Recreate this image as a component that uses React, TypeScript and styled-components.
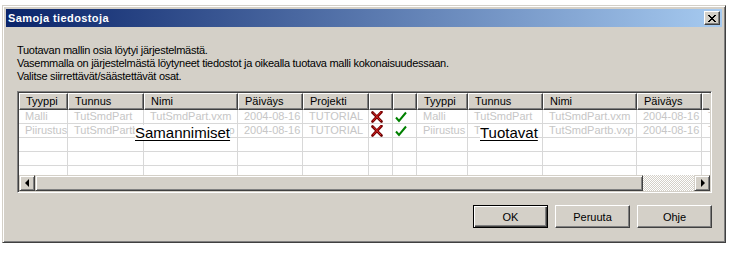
import React from "react";
import styled, { createGlobalStyle } from "styled-components";

const GlobalStyle = createGlobalStyle`
  html, body { margin: 0; padding: 0; background: #ffffff; }
  body { font-family: "Liberation Sans", Arial, sans-serif; font-size: 11px; }
  * { box-sizing: border-box; }
`;

const FACE = "#D4D0C8";

const Window = styled.div`
  margin: 5px 0 0 2px;
  width: 724px;
  height: 238px;
  background: ${FACE};
  border: 1px solid;
  border-color: ${FACE} #404040 #404040 ${FACE};
  box-shadow: inset 1px 1px #ffffff, inset -1px -1px #808080;
  padding: 3px;
  display: flex;
  flex-direction: column;
`;

const TitleBar = styled.div`
  height: 18px;
  display: flex;
  align-items: center;
  justify-content: space-between;
  padding: 0 2px 0 2px;
  background: linear-gradient(to right, #0a246a, #a6caf0);
`;

const TitleText = styled.span`
  color: #ffffff;
  font-weight: bold;
  font-size: 11px;
  font-family: "Liberation Sans", Arial, sans-serif;
  letter-spacing: 0.4px;
`;

const CloseButton = styled.div`
  width: 16px;
  height: 14px;
  background: ${FACE};
  border: 1px solid;
  border-color: #ffffff #404040 #404040 #ffffff;
  box-shadow: inset -1px -1px #808080;
  display: flex;
  align-items: center;
  justify-content: center;
`;

const Content = styled.div`
  flex: 1;
  display: flex;
  flex-direction: column;
  padding: 17px 10px 0 11px;
`;

const Message = styled.div`
  color: #000000;
  font-size: 11px;
  line-height: 13px;
  letter-spacing: -0.28px;
`;

const GridFrame = styled.div`
  margin-top: 8px;
  width: 695px;
  height: 102px;
  border: 1px solid;
  border-color: #808080 #ffffff #ffffff #808080;
  box-shadow: inset 1px 1px #404040, inset -1px -1px ${FACE};
  padding: 1px;
  display: flex;
  flex-direction: column;
`;

const Client = styled.div`
  flex: 1;
  overflow: hidden;
  display: flex;
  flex-direction: column;
  background: #ffffff;
`;

const HeaderRow = styled.div`
  display: flex;
  height: 17px;
  flex-shrink: 0;
`;

const HeaderCell = styled.div<{ $w: number; $last?: boolean }>`
  width: ${(p) => p.$w}px;
  flex-shrink: 0;
  height: 17px;
  background: ${FACE};
  border: 1px solid;
  border-color: #ffffff ${(p) => (p.$last ? FACE : "#404040")} #404040 #ffffff;
  box-shadow: ${(p) => (p.$last ? "inset 0 -1px #808080" : "inset -1px -1px #808080")};
  padding-left: 6px;
  line-height: 14px;
  font-size: 11px;
  color: #000000;
  white-space: nowrap;
  overflow: hidden;
`;

const BodyViewport = styled.div`
  position: relative;
  height: 65px;
  overflow: hidden;
  flex-shrink: 0;
`;

const Row = styled.div`
  display: flex;
  height: 14px;
`;

const Cell = styled.div<{ $w: number; $icon?: boolean; $last?: boolean }>`
  width: ${(p) => p.$w}px;
  flex-shrink: 0;
  height: 14px;
  border-right: ${(p) => (p.$last ? "none" : "1px solid #d8d8d8")};
  border-bottom: 1px solid #d8d8d8;
  padding-left: ${(p) => (p.$icon ? "2px" : "6px")};
  line-height: 13px;
  font-size: 11px;
  color: #c6c6c6;
  white-space: nowrap;
  overflow: hidden;
  display: flex;
  align-items: center;
`;

const OverlayLabel = styled.span<{ $left: number }>`
  position: absolute;
  left: ${(p) => p.$left}px;
  top: 15px;
  background: #ffffff;
  color: #000000;
  font-size: 15px;
  line-height: 15px;
  text-decoration: underline;
  text-underline-offset: 2px;
  white-space: nowrap;
`;

const ScrollBar = styled.div`
  display: flex;
  height: 16px;
  flex-shrink: 0;
`;

const Raised = styled.div`
  background: ${FACE};
  border: 1px solid;
  border-color: ${FACE} #404040 #404040 ${FACE};
  box-shadow: inset 1px 1px #ffffff, inset -1px -1px #808080;
`;

const ArrowButton = styled(Raised)`
  width: 16px;
  height: 16px;
  flex-shrink: 0;
  display: flex;
  align-items: center;
  justify-content: center;
`;

const Arrow = styled.div<{ $dir: "left" | "right" }>`
  width: 0;
  height: 0;
  border-top: 4px solid transparent;
  border-bottom: 4px solid transparent;
  ${(p) =>
    p.$dir === "left"
      ? "border-right: 4px solid #000; margin-right: 1px;"
      : "border-left: 4px solid #000; margin-left: 1px;"}
`;

const Thumb = styled(Raised)`
  width: 608px;
  height: 16px;
  flex-shrink: 0;
`;

const Track = styled.div`
  flex: 1;
  height: 16px;
  background: repeating-conic-gradient(${FACE} 0 25%, #ffffff 0 50%) 0 0 / 2px 2px;
`;

const ButtonRow = styled.div`
  margin-top: 12px;
  display: flex;
  justify-content: flex-end;
  gap: 7px;
  width: 695px;
`;

const PushButton = styled.div<{ $default?: boolean }>`
  width: 75px;
  height: 23px;
  background: ${FACE};
  display: flex;
  align-items: center;
  justify-content: center;
  font-size: 11px;
  color: #000000;
  border: 1px solid;
  ${(p) =>
    p.$default
      ? `border-color: #000000;
         box-shadow: inset 1px 1px #ffffff, inset -1px -1px #404040, inset -2px -2px #808080;`
      : `border-color: #ffffff #404040 #404040 #ffffff;
         box-shadow: inset -1px -1px #808080;`}
`;

const RedX = () => (
  <svg width="12" height="12" viewBox="0 0 12 12">
    <path d="M1.5 1.5 L10.5 10.5" stroke="#6a0000" strokeWidth="2.6" strokeLinecap="round" />
    <path d="M10.5 1 L1.5 10.5" stroke="#7a0000" strokeWidth="2.6" strokeLinecap="round" />
    <path d="M2 1.5 L10 10" stroke="#e03030" strokeWidth="1" />
    <path d="M10 1 L2 10" stroke="#d02020" strokeWidth="1" />
  </svg>
);

const GreenCheck = () => (
  <svg width="12" height="12" viewBox="0 0 12 12">
    <path d="M1 6.5 L4 10 L11 1.5" stroke="#008000" strokeWidth="2" fill="none" strokeLinejoin="miter" />
  </svg>
);

const CloseGlyph = () => (
  <svg width="8" height="7" viewBox="0 0 8 7" shapeRendering="crispEdges">
    <path
      d="M0 0h2v1h-2z M6 0h2v1h-2z M1 1h2v1h-2z M5 1h2v1h-2z M2 2h4v1h-4z M3 3h2v1h-2z M2 4h4v1h-4z M1 5h2v1h-2z M5 5h2v1h-2z M0 6h2v1h-2z M6 6h2v1h-2z"
      fill="#000"
    />
  </svg>
);

type Col = { title: string; w: number; icon?: boolean };

const columns: Col[] = [
  { title: "Tyyppi", w: 49 },
  { title: "Tunnus", w: 76 },
  { title: "Nimi", w: 94 },
  { title: "Päiväys", w: 65 },
  { title: "Projekti", w: 66 },
  { title: "", w: 24, icon: true },
  { title: "", w: 24, icon: true },
  { title: "Tyyppi", w: 51 },
  { title: "Tunnus", w: 75 },
  { title: "Nimi", w: 94 },
  { title: "Päiväys", w: 65 },
  { title: "Projekti", w: 8 },
];

const rows: (string | React.ReactNode)[][] = [
  [
    "Malli",
    "TutSmdPart",
    "TutSmdPart.vxm",
    "2004-08-16",
    "TUTORIAL",
    <RedX key="x" />,
    <GreenCheck key="c" />,
    "Malli",
    "TutSmdPart",
    "TutSmdPart.vxm",
    "2004-08-16",
    "TUTORIAL",
  ],
  [
    "Piirustus",
    "TutSmdPartb",
    "TutSmdPartb.vxp",
    "2004-08-16",
    "TUTORIAL",
    <RedX key="x" />,
    <GreenCheck key="c" />,
    "Piirustus",
    "TutSmdPartb",
    "TutSmdPartb.vxp",
    "2004-08-16",
    "TUTORIAL",
  ],
  columns.map(() => ""),
  columns.map(() => ""),
  columns.map(() => ""),
];

export default function App() {
  const lastIndex = columns.length - 1;
  return (
    <>
      <GlobalStyle />
      <Window>
        <TitleBar>
          <TitleText>Samoja tiedostoja</TitleText>
          <CloseButton>
            <CloseGlyph />
          </CloseButton>
        </TitleBar>
        <Content>
          <Message>
            Tuotavan mallin osia löytyi järjestelmästä.
            <br />
            Vasemmalla on järjestelmästä löytyneet tiedostot ja oikealla tuotava malli kokonaisuudessaan.
            <br />
            Valitse siirrettävät/säästettävät osat.
          </Message>
          <GridFrame>
            <Client>
              <HeaderRow>
                {columns.map((c, i) => (
                  <HeaderCell key={i} $w={c.w} $last={i === lastIndex}>
                    {c.title}
                  </HeaderCell>
                ))}
              </HeaderRow>
              <BodyViewport>
                {rows.map((r, ri) => (
                  <Row key={ri}>
                    {columns.map((c, ci) => (
                      <Cell key={ci} $w={c.w} $icon={c.icon} $last={ci === lastIndex}>
                        {r[ci]}
                      </Cell>
                    ))}
                  </Row>
                ))}
                <OverlayLabel $left={116}>Samannimiset</OverlayLabel>
                <OverlayLabel $left={461}>Tuotavat</OverlayLabel>
              </BodyViewport>
              <ScrollBar>
                <ArrowButton>
                  <Arrow $dir="left" />
                </ArrowButton>
                <Thumb />
                <Track />
                <ArrowButton>
                  <Arrow $dir="right" />
                </ArrowButton>
              </ScrollBar>
            </Client>
          </GridFrame>
          <ButtonRow>
            <PushButton $default>OK</PushButton>
            <PushButton>Peruuta</PushButton>
            <PushButton>Ohje</PushButton>
          </ButtonRow>
        </Content>
      </Window>
    </>
  );
}
